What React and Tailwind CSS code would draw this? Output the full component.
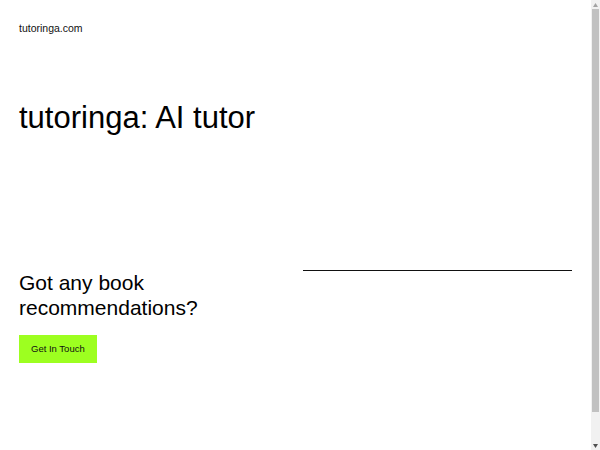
import React from 'react';

function Scrollbar() {
  return (
    <div className="w-[9px] h-[450px] bg-[#f1f1f1] flex flex-col items-center">
      <div className="h-[9px] flex items-center justify-center">
        <svg width="5" height="4" viewBox="0 0 5 4"><path d="M2.5 0L5 4H0z" fill="#a3a3a3" /></svg>
      </div>
      <div className="w-[7px] h-[403px] bg-[#c1c1c1]" />
      <div className="flex-1" />
      <div className="h-[9px] flex items-center justify-center">
        <svg width="5" height="4" viewBox="0 0 5 4"><path d="M0 0H5L2.5 4z" fill="#505050" /></svg>
      </div>
    </div>
  );
}

export default function App() {
  return (
    <div className="flex h-[450px] overflow-hidden bg-white">
      <main className="flex-1 text-black font-['Liberation_Sans',Arial,sans-serif] pl-[19px] pr-[19px]">
        <header className="pt-[21px] text-[10.5px] leading-[15px] text-[#111]">
          tutoringa.com
        </header>

        <h1 className="mt-[63px] text-[31px] leading-[37px] font-normal">tutoringa: AI tutor</h1>

        <section className="mt-[134px] grid grid-cols-2 gap-[15px] pb-[121px]">
          <div>
            <h2 className="text-[21px] leading-[25px] font-normal">Got any book recommendations?</h2>
            <button className="mt-[15px] h-[28px] px-[12px] bg-[#9dff20] text-[9.5px] text-[#111]">
              Get In Touch
            </button>
          </div>
          <div>
            <hr className="border-0 border-t-[1.5px] border-[#111]" />
          </div>
        </section>
      </main>
      <Scrollbar />
    </div>
  );
}
